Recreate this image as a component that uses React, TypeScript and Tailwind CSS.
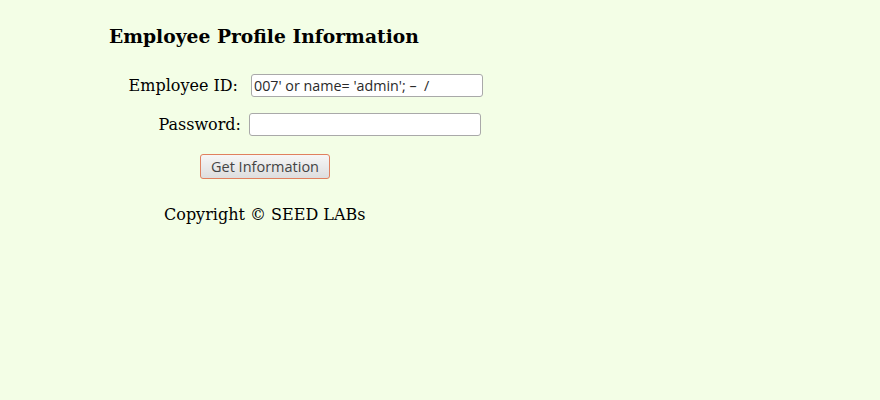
import React from "react";

export default function App() {
  const serif = { fontFamily: '"DejaVu Serif", serif' };
  return (
    <div className="w-[880px] h-[400px] bg-[#f3fee6] text-black overflow-hidden" style={serif}>
      <div className="pl-[109px] pt-[25px]">
        <h3 className="text-[18.72px] leading-[22px] font-bold font-['DejaVu_Serif',serif]">Employee Profile Information</h3>
      </div>
      <div className="mt-[27px] flex items-center h-[23px]">
        <div className="w-[238px] text-right text-[16px] leading-[19px] font-['DejaVu_Serif',serif]">Employee ID:</div>
        <input
          readOnly
          value="007' or name= 'admin'; –  /"
          className="ml-[13px] w-[232px] h-[23px] border border-[#a9a9a9] rounded-[3px] bg-white px-[2px] text-[14.3px] text-[#2a2a2a] font-['Open_Sans',sans-serif] outline-none"
        />
      </div>
      <div className="mt-[16px] flex items-center h-[23px]">
        <div className="w-[241px] text-right text-[16px] leading-[19px] font-['DejaVu_Serif',serif]">Password:</div>
        <input
          readOnly
          type="password"
          className="ml-[8px] w-[232px] h-[23px] border border-[#a9a9a9] rounded-[3px] bg-white outline-none"
        />
      </div>
      <div className="mt-[18px] pl-[200px]">
        <button className="w-[130px] h-[25px] pt-[2px] border border-[#e0805f] rounded-[3px] bg-gradient-to-b from-[#f6f6f6] to-[#dedede] text-[14.5px] text-[#444] font-['Open_Sans',sans-serif] leading-none">
          Get Information
        </button>
      </div>
      <div className="mt-[26px] pl-[164px] text-[16px] leading-[19px] font-['DejaVu_Serif',serif]">
        Copyright © SEED LABs
      </div>
    </div>
  );
}
